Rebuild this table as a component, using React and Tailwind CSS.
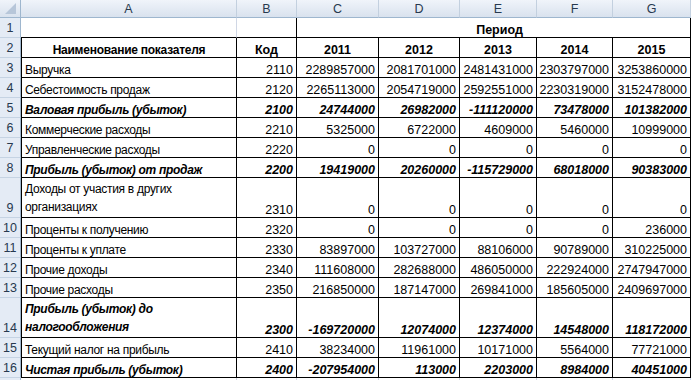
import React from "react";

const rows = [
  { n: 3, label: "Выручка", code: "2110", v: ["2289857000", "2081701000", "2481431000", "2303797000", "3253860000"] },
  { n: 4, label: "Себестоимость продаж", code: "2120", v: ["2265113000", "2054719000", "2592551000", "2230319000", "3152478000"] },
  { n: 5, label: "Валовая прибыль (убыток)", code: "2100", bi: true, v: ["24744000", "26982000", "-111120000", "73478000", "101382000"] },
  { n: 6, label: "Коммерческие расходы", code: "2210", v: ["5325000", "6722000", "4609000", "5460000", "10999000"] },
  { n: 7, label: "Управленческие расходы", code: "2220", v: ["0", "0", "0", "0", "0"] },
  { n: 8, label: "Прибыль (убыток) от продаж", code: "2200", bi: true, v: ["19419000", "20260000", "-115729000", "68018000", "90383000"] },
  { n: 9, label: ["Доходы от участия в других", "организациях"], code: "2310", tall: true, v: ["0", "0", "0", "0", "0"] },
  { n: 10, label: "Проценты к получению", code: "2320", v: ["0", "0", "0", "0", "236000"] },
  { n: 11, label: "Проценты к уплате", code: "2330", v: ["83897000", "103727000", "88106000", "90789000", "310225000"] },
  { n: 12, label: "Прочие доходы", code: "2340", v: ["111608000", "282688000", "486050000", "222924000", "2747947000"] },
  { n: 13, label: "Прочие расходы", code: "2350", v: ["216850000", "187147000", "269841000", "185605000", "2409697000"] },
  { n: 14, label: ["Прибыль (убыток) до", "налогообложения"], code: "2300", bi: true, tall: true, v: ["-169720000", "12074000", "12374000", "14548000", "118172000"] },
  { n: 15, label: "Текущий налог на прибыль", code: "2410", v: ["38234000", "11961000", "10171000", "5564000", "77721000"] },
  { n: 16, label: "Чистая прибыль (убыток)", code: "2400", bi: true, v: ["-207954000", "113000", "2203000", "8984000", "40451000"] },
];

const letters = ["A", "B", "C", "D", "E", "F", "G"];

function RowHead({ n, tall }) {
  return (
    <div
      className={`${tall ? "h-[40px]" : "h-[20px]"} flex items-end justify-center bg-[#e4ebf5] border-r border-b border-r-[#9eb6ce] border-b-[#c5d3e3] text-[#27394f] leading-[15px] pb-[1px]`}
    >
      {n}
    </div>
  );
}

export default function App() {
  return (
    <div
      className="w-[691px] h-[380px] overflow-hidden bg-white text-black text-[12.5px]"
      style={{ fontFamily: "'Liberation Sans', Arial, sans-serif" }}
    >
      <div className="grid grid-cols-[21px_216px_60px_82px_81px_77px_76px_78px]">
        {/* Column headers */}
        <div className="h-[18px] bg-linear-to-b from-[#f0f4fa] to-[#d9e2ee] border-r border-b border-r-[#9eb6ce] border-b-[#9eb6ce] flex items-end justify-end pr-[3px] pb-[2px]">
          <svg width="12" height="12" viewBox="0 0 12 12">
            <polygon points="11,0 11,11 0,11" fill="#b7c6d9" />
          </svg>
        </div>
        {letters.map((l) => (
          <div
            key={l}
            className="h-[18px] bg-linear-to-b from-[#f0f4fa] to-[#d9e2ee] border-r border-b border-r-[#c3d0df] border-b-[#9eb6ce] flex items-center justify-center text-[#27394f] leading-[15px] pt-[1px]"
          >
            {l}
          </div>
        ))}

        {/* Row 1 */}
        <RowHead n={1} />
        <div className="h-[20px] border-r border-b border-r-[#d0d7e5] border-b-black" />
        <div className="h-[20px] border-r border-b border-r-black border-b-black" />
        <div className="col-span-5 h-[20px] border-r border-b border-black flex items-end justify-center font-bold leading-[14px] pl-[12px]">
          Период
        </div>

        {/* Row 2 */}
        <RowHead n={2} />
        <div className="h-[20px] border-l border-r border-b border-black flex items-end justify-center font-bold leading-[14px] text-[12px] tracking-[-0.25px]">
          Наименование показателя
        </div>
        <div className="h-[20px] border-r border-b border-black flex items-end justify-center font-bold leading-[14px]">
          Код
        </div>
        {["2011", "2012", "2013", "2014", "2015"].map((y) => (
          <div key={y} className="h-[20px] border-r border-b border-black flex items-end justify-center font-bold leading-[14px]">
            {y}
          </div>
        ))}

        {rows.map((r) => {
          const h = r.tall ? "h-[40px]" : "h-[20px]";
          const st = r.bi ? "font-bold italic" : "";
          return (
            <React.Fragment key={r.n}>
              <RowHead n={r.n} tall={r.tall} />
              <div className={`${h} border-l border-r border-b border-black flex items-end pl-[3px] whitespace-nowrap text-[12px] tracking-[-0.3px] ${st} ${r.tall ? "leading-[18px] pb-[1px]" : "leading-[14px]"}`}>
                {Array.isArray(r.label) ? (
                  <span>
                    {r.label[0]}
                    <br />
                    {r.label[1]}
                  </span>
                ) : (
                  r.label
                )}
              </div>
              <div className={`${h} border-r border-b border-black flex items-end justify-end pr-[3px] leading-[14px] ${st}`}>
                {r.code}
              </div>
              {r.v.map((x, i) => (
                <div key={i} className={`${h} border-r border-b border-black flex items-end justify-end pr-[3px] leading-[14px] ${st}`}>
                  {x}
                </div>
              ))}
            </React.Fragment>
          );
        })}

        {/* Row 17 (partially visible, label hidden below the fold) */}
        <div className="h-[20px] bg-[#e4ebf5] border-r border-r-[#9eb6ce]" />
        <div className="h-[20px] border-r border-r-[#d0d7e5]" />
        <div className="h-[20px] border-r border-r-[#d0d7e5]" />
        <div className="h-[20px] border-r border-r-[#d0d7e5]" />
        <div className="h-[20px] border-r border-r-[#d0d7e5]" />
        <div className="h-[20px] border-r border-r-[#d0d7e5]" />
        <div className="h-[20px] border-r border-r-[#d0d7e5]" />
        <div className="h-[20px] border-r border-r-[#d0d7e5]" />
      </div>
    </div>
  );
}
